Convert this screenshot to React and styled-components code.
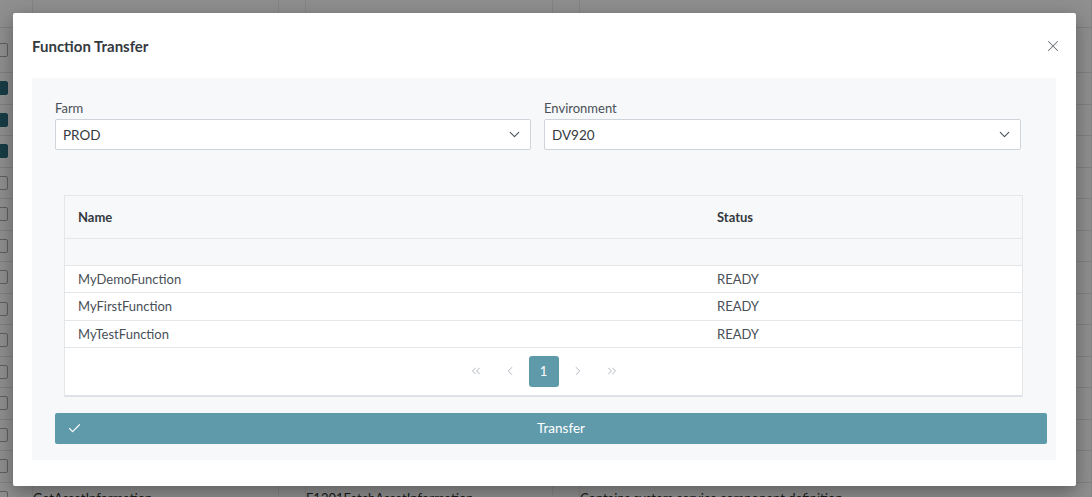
import React from 'react'
import styled, { createGlobalStyle } from 'styled-components'
import { ChevronDown, ChevronLeft, ChevronRight, ChevronsLeft, ChevronsRight, X, Check } from 'lucide-react'

const GlobalStyle = createGlobalStyle`
  html, body { margin: 0; padding: 0; }
  body {
    font-family: Lato, "Noto Sans", sans-serif;
    background: #ffffff;
    overflow: hidden;
  }
  * { box-sizing: border-box; }
`

const teal = '#5f9aab'

const bgRows = [
  { checked: false, a: '', b: '', c: '' },
  { checked: true },
  { checked: true },
  { checked: true },
  {}, {}, {}, {}, {}, {}, {}, {}, {}, {},
  { a: 'GetAssetInformation', b: 'F1201FetchAssetInformation', c: 'Contains system service component definition' },
]

const functions = [
  { name: 'MyDemoFunction', status: 'READY' },
  { name: 'MyFirstFunction', status: 'READY' },
  { name: 'MyTestFunction', status: 'READY' },
]

const Page = styled.div`
  width: 1092px;
  height: 497px;
  position: relative;
  overflow: hidden;
`

const BgTable = styled.div`
  display: flex;
  flex-direction: column;
  color: #333;
  font-size: 13px;
`

const BgRow = styled.div`
  display: grid;
  grid-template-columns: 33px 246px 27px 247px 27px 1fr;
  height: ${p => p.$h || 31.5}px;
  border-bottom: 1px solid #e6e6e6;
  align-items: center;

  & > div {
    height: 100%;
    display: flex;
    align-items: center;
    border-right: 1px solid #eeeeee;
    white-space: nowrap;
    overflow: hidden;
  }
`

const BgCheck = styled.span`
  width: 14px;
  height: 14px;
  margin-left: -6px;
  border-radius: 2px;
  border: 1px solid ${p => (p.$on ? '#2a6b7c' : '#aaa')};
  background: ${p => (p.$on ? '#2a6b7c' : '#fff')};
`

const Overlay = styled.div`
  position: absolute;
  inset: 0;
  background: rgba(0, 0, 0, 0.44);
  padding: 13px 16px 11px 13px;
  display: flex;
`

const Modal = styled.div`
  flex: 1;
  background: #fff;
  border-radius: 2px;
  box-shadow: 0 6px 20px rgba(0, 0, 0, 0.35);
  padding: 24px 20px 26px 19px;
  display: flex;
  flex-direction: column;
`

const Header = styled.div`
  display: flex;
  align-items: center;
  justify-content: space-between;
  height: 18px;
  margin-bottom: 23px;
`

const Title = styled.h2`
  margin: 0;
  font-size: 15px;
  font-weight: 700;
  color: #343a40;
`

const CloseBtn = styled.button`
  border: none;
  background: none;
  padding: 0;
  margin-right: -6px;
  display: flex;
  color: #6c757d;
  cursor: pointer;
`

const Panel = styled.div`
  flex: 1;
  background: #f7f8fa;
  padding: 22px 9px 16px 23px;
  display: flex;
  flex-direction: column;
`

const FieldRow = styled.div`
  display: grid;
  grid-template-columns: 476px 477px;
  column-gap: 13px;
`

const Field = styled.div`
  display: flex;
  flex-direction: column;
`

const Label = styled.label`
  font-size: 13px;
  color: #495057;
  line-height: 16px;
  margin-bottom: 3px;
`

const Select = styled.div`
  height: 31px;
  background: #fff;
  border: 1px solid #ced4da;
  border-radius: 2px;
  display: flex;
  align-items: center;
  justify-content: space-between;
  padding: 0 7px 0 7px;
  font-size: 13.5px;
  color: #343a40;
`

const Grid = styled.div`
  margin: 45px 24px 0 9px;
  border: 1px solid #e4e7ea;
  border-bottom: 2px solid #dee2e6;
  background: #fff;
`

const Row = styled.div`
  display: grid;
  grid-template-columns: 639px 1fr;
  height: ${p => p.$h}px;
  align-items: center;
  padding-left: 13px;
  background: ${p => (p.$head ? '#f7f8fa' : '#fff')};
  border-bottom: 1px solid #e4e7ea;
  font-size: 13px;
  font-weight: ${p => (p.$bold ? 700 : 400)};
  color: ${p => (p.$bold ? '#343a40' : '#495057')};
`

const Pager = styled.div`
  height: 47px;
  display: flex;
  align-items: center;
  justify-content: center;
  gap: 4px;
`

const PageBtn = styled.button`
  width: 30px;
  height: 31px;
  border: none;
  border-radius: 3px;
  padding: 0;
  display: flex;
  align-items: center;
  justify-content: center;
  background: ${p => (p.$active ? teal : 'transparent')};
  color: ${p => (p.$active ? '#fff' : '#a3abb3')};
  font-family: Lato, sans-serif;
  font-size: 13px;
`

const TransferBtn = styled.button`
  margin-top: 16px;
  height: 31px;
  border: none;
  border-radius: 2px;
  background: ${teal};
  color: #fff;
  font-family: Lato, sans-serif;
  font-size: 13.5px;
  display: grid;
  grid-template-columns: 40px 1fr 32px;
  align-items: center;
  padding: 0 0 0 12px;
  cursor: pointer;

  span { text-align: center; }
`

export default function App() {
  return (
    <Page>
      <GlobalStyle />
      <BgTable>
        <BgRow $h={28}><div /><div /><div /><div /><div /><div /></BgRow>
        {bgRows.map((r, i) => (
          <BgRow key={i} $h={i === 0 ? 45 : 31.5}>
            <div><BgCheck $on={r.checked} /></div>
            <div>{r.a}</div>
            <div />
            <div>{r.b}</div>
            <div />
            <div>{r.c}</div>
          </BgRow>
        ))}
      </BgTable>
      <Overlay>
        <Modal>
          <Header>
            <Title>Function Transfer</Title>
            <CloseBtn aria-label="close"><X size={18} strokeWidth={1.4} /></CloseBtn>
          </Header>
          <Panel>
            <FieldRow>
              <Field>
                <Label>Farm</Label>
                <Select>PROD<ChevronDown size={17} strokeWidth={1.5} color="#495057" /></Select>
              </Field>
              <Field>
                <Label>Environment</Label>
                <Select>DV920<ChevronDown size={17} strokeWidth={1.5} color="#495057" /></Select>
              </Field>
            </FieldRow>
            <Grid>
              <Row $h={43} $head $bold><span>Name</span><span>Status</span></Row>
              <Row $h={27} $head />
              {functions.map(f => (
                <Row key={f.name} $h={27.3}><span>{f.name}</span><span>{f.status}</span></Row>
              ))}
              <Pager>
                <PageBtn><ChevronsLeft size={14} strokeWidth={1.5} /></PageBtn>
                <PageBtn><ChevronLeft size={14} strokeWidth={1.5} /></PageBtn>
                <PageBtn $active>1</PageBtn>
                <PageBtn><ChevronRight size={14} strokeWidth={1.5} /></PageBtn>
                <PageBtn><ChevronsRight size={14} strokeWidth={1.5} /></PageBtn>
              </Pager>
            </Grid>
            <TransferBtn>
              <Check size={15} strokeWidth={1.8} />
              <span>Transfer</span>
              <i />
            </TransferBtn>
          </Panel>
        </Modal>
      </Overlay>
    </Page>
  )
}
